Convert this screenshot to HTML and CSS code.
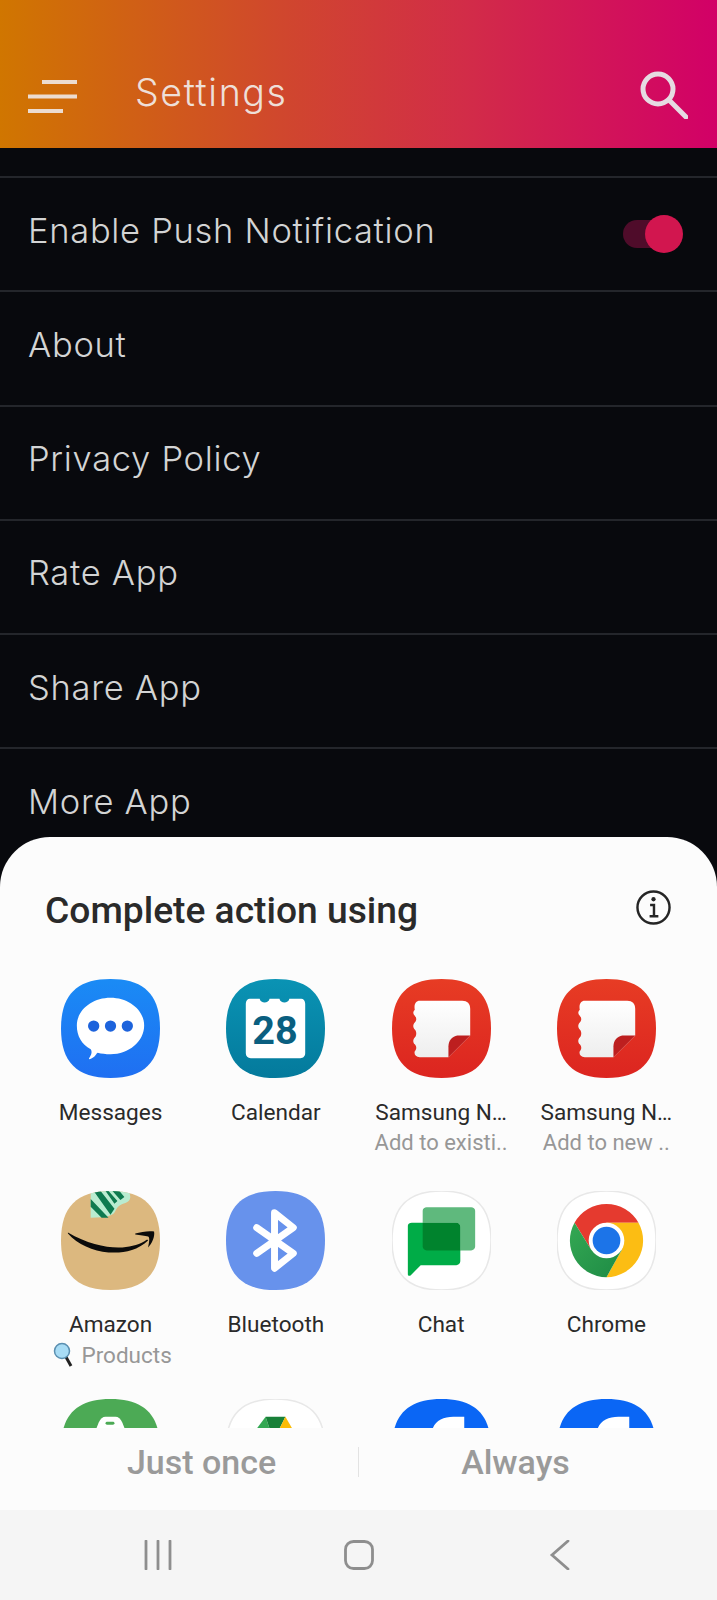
FILE: index.html
```html
<!DOCTYPE html>
<html lang="en">
<head>
<meta charset="utf-8">
<title>Settings</title>
<link rel="stylesheet" href="styles.css">
</head>
<body>
<svg class="defs" width="0" height="0" aria-hidden="true">
  <defs>
    <clipPath id="sq" clipPathUnits="userSpaceOnUse"><path d="M50 0C84 0 100 16 100 50C100 84 84 100 50 100C16 100 0 84 0 50C0 16 16 0 50 0Z"/></clipPath>
    <symbol id="squircle" viewBox="0 0 100 100"><path d="M50 0C84 0 100 16 100 50C100 84 84 100 50 100C16 100 0 84 0 50C0 16 16 0 50 0Z"/></symbol>
    <linearGradient id="gMsg" x1="0" y1="0" x2="0" y2="1"><stop offset="0" stop-color="#1a8bf5"/><stop offset="1" stop-color="#1f6ff2"/></linearGradient>
    <linearGradient id="gCal" x1="0" y1="0" x2="0" y2="1"><stop offset="0" stop-color="#0a93b4"/><stop offset="1" stop-color="#047a9c"/></linearGradient>
    <linearGradient id="gNote" x1="0" y1="0" x2="0" y2="1"><stop offset="0" stop-color="#e73c24"/><stop offset="1" stop-color="#dc2520"/></linearGradient>
    <linearGradient id="gPage" x1="0" y1="0" x2="0" y2="1"><stop offset="0" stop-color="#ffffff"/><stop offset="1" stop-color="#eeeeee"/></linearGradient>
    <linearGradient id="gGreen" x1="0" y1="0" x2="1" y2="1"><stop offset="0" stop-color="#34a853"/><stop offset="1" stop-color="#1e8b45"/></linearGradient>
    <symbol id="notes" viewBox="0 0 100 100">
      <path fill="url(#gNote)" d="M50 0C84 0 100 16 100 50C100 84 84 100 50 100C16 100 0 84 0 50C0 16 16 0 50 0Z"/>
      <path fill="url(#gPage)" d="M28 22H71C76 22 79 25 79 30V57L57 79H28C24 79 22 76 23 73C25 71 25 68 23 66C21 64 21 61 23 59C25 57 25 53 23 51C21 49 21 46 23 44C25 42 25 39 23 37C21 35 21 33 23 31C22 26 24 22 28 22Z"/>
      <path fill="#bd1f1f" d="M57 79V68C57 62 61 58 66 57H79Z"/>
    </symbol>
  </defs>
</svg>

<header class="appbar">
  <svg class="menu-icon" viewBox="0 0 49 33"><path d="M14 2H49M0 16.500H49M0 31H35"/></svg>
  <h1 class="appbar-title">Settings</h1>
  <svg class="search-icon" viewBox="0 0 48 48"><circle cx="18" cy="18" r="15"/><path d="M29 29L46 46"/></svg>
</header>

<main class="settings">
  <div class="row row-toggle">
    <span>Enable Push Notification</span>
    <span class="switch"><span class="switch-track"></span><span class="switch-thumb"></span></span>
  </div>
  <div class="row">About</div>
  <div class="row">Privacy Policy</div>
  <div class="row">Rate App</div>
  <div class="row">Share App</div>
  <div class="row">More App</div>
</main>

<div class="overlay">
  <section class="sheet">
    <div class="sheet-head">
      <h2 class="sheet-title">Complete action using</h2>
      <svg class="info-icon" viewBox="0 0 36 36"><circle cx="18" cy="18" r="16.500"/><path d="M14.500 15.500H18.500V27M14 27H23"/><circle class="info-dot" cx="18" cy="9.500" r="2.200"/></svg>
    </div>
    <div class="apps">
      <div class="app">
        <svg class="app-icon" viewBox="0 0 100 100">
          <use href="#squircle" fill="url(#gMsg)"/>
          <path fill="#fff" d="M50 19C68.700 19 84 31.500 84 47C84 63 68.700 76 50 76C45 76 41 75.500 37 74.500C34 77 36 78 29 81C28 81 28 80 29 79C31 76 31.500 73 30 71C21 66 16 58 16 47C16 31.500 31.300 19 50 19Z"/>
          <circle cx="33" cy="47.500" r="5.700" fill="#1d63dc"/><circle cx="50" cy="47.500" r="5.700" fill="#1d63dc"/><circle cx="67" cy="47.500" r="5.700" fill="#1d63dc"/>
        </svg>
        <span class="app-name">Messages</span>
      </div>
      <div class="app">
        <svg class="app-icon" viewBox="0 0 100 100">
          <use href="#squircle" fill="url(#gCal)"/>
          <path fill="#fff" d="M24 20H34C35 25 43 25 44 20H54C55 25 63 25 64 20H76C78 20 80 22 80 25V75C80 78 78 80 75 80H25C22 80 20 78 20 75V25C20 22 22 20 24 20Z"/>
          <text class="cal-num" x="49.500" y="66" text-anchor="middle">28</text>
        </svg>
        <span class="app-name">Calendar</span>
      </div>
      <div class="app">
        <svg class="app-icon" viewBox="0 0 100 100"><use href="#notes"/></svg>
        <span class="app-name">Samsung N…</span>
        <span class="app-sub">Add to existi..</span>
      </div>
      <div class="app">
        <svg class="app-icon" viewBox="0 0 100 100"><use href="#notes"/></svg>
        <span class="app-name">Samsung N…</span>
        <span class="app-sub">Add to new ..</span>
      </div>
      <div class="app">
        <svg class="app-icon" viewBox="0 0 100 100">
          <use href="#squircle" fill="#dcb87f"/>
          <g clip-path="url(#sq)">
            <path fill="#b9ecd0" d="M30 0H69L70 6C70 9 68 11 65 12C61 13 57 15 55 20C53 25 47 27 30 27Z"/>
            <path fill="#0e7a4f" d="M30 8L48 27H41L30 16ZM33 0H40L54 18L50 24ZM52 0H59L64 6L60 9ZM45 0H48L57 10L54 13Z"/>
          </g>
          <path fill="#0b0b0b" d="M7 42C27 54 48 58 62 57C72 56 80 54 87 49L88 50C76 61 62 63 48 62C32 61 17 54 7 43Z"/>
          <path fill="#0b0b0b" d="M75 43C81 41 90 40 94 41C95 46 92 53 88 57C89 52 90 47 88 46C85 45 80 45 75 44Z"/>
        </svg>
        <span class="app-name">Amazon</span>
        <span class="app-sub app-sub-search"><svg class="mag" viewBox="0 0 20 26"><path class="mag-handle" d="M13 15L18 24"/><circle class="mag-glass" cx="9" cy="9" r="7.500"/></svg>Products</span>
      </div>
      <div class="app">
        <svg class="app-icon" viewBox="0 0 100 100">
          <use href="#squircle" fill="#6792ec"/>
          <path class="bt" d="M31 37L68 63L49 78V22L68 37L31 63"/>
        </svg>
        <span class="app-name">Bluetooth</span>
      </div>
      <div class="app">
        <svg class="app-icon" viewBox="0 0 100 100">
          <use href="#squircle" class="outlined"/>
          <path fill="#00ac47" d="M16 35C16 33 18 32 20 32H65C67 32 69 34 69 36V71C69 73 67 75 65 75H29L19 85C18 86 16 86 16 84Z"/>
          <path fill="#5fb97d" d="M35 16.500C33 16.500 31 18 31 20V32H65C67 32 69 34 69 36V60H80C82 60 84 58 84 56V20C84 18 82 16.500 80 16.500Z"/>
          <path fill="#00832d" d="M31 32H65C67 32 69 34 69 36V60H35C33 60 31 58 31 56Z"/>
        </svg>
        <span class="app-name">Chat</span>
      </div>
      <div class="app">
        <svg class="app-icon" viewBox="0 0 100 100">
          <use href="#squircle" class="outlined"/>
          <path fill="#e53a2f" d="M17.700 32A37 37 0 0 1 82.300 32H50L34.400 59Z"/>
          <path fill="#fcbd13" d="M82.300 32A37 37 0 0 1 50 87L65.600 59L50 32Z"/>
          <path fill="url(#gGreen)" d="M50 87A37 37 0 0 1 17.700 32L34.400 59H65.600Z"/>
          <circle cx="50" cy="50" r="18" fill="#fff"/>
          <circle cx="50" cy="50" r="14" fill="#1c74e8"/>
        </svg>
        <span class="app-name">Chrome</span>
      </div>
      <div class="app">
        <svg class="app-icon" viewBox="0 0 100 100">
          <use href="#squircle" fill="#4caa55"/>
          <path fill="#fff" d="M45 18H55C58 18 60 20 62 24L64 29V100H36V29L38 24C40 20 42 18 45 18Z"/>
          <rect x="45" y="23" width="9" height="3" rx="1.500" fill="#4caa55"/>
        </svg>
      </div>
      <div class="app">
        <svg class="app-icon" viewBox="0 0 100 100">
          <use href="#squircle" class="outlined"/>
          <path fill="#34a853" d="M40 18L44 30H31Z"/>
          <path fill="#188038" d="M40 18H60L54 30H44Z"/>
          <path fill="#fbbc05" d="M60 18L67 30H54Z"/>
        </svg>
      </div>
      <div class="app">
        <svg class="app-icon" viewBox="0 0 100 100">
          <use href="#squircle" fill="#0a66f5"/>
          <path fill="#fff" d="M41 30C44 22 52 18 62 18H73V100H41Z"/>
        </svg>
      </div>
      <div class="app">
        <svg class="app-icon" viewBox="0 0 100 100">
          <use href="#squircle" fill="#0a66f5"/>
          <path fill="#fff" d="M41 30C44 22 52 18 62 18H73V100H41Z"/>
        </svg>
      </div>
    </div>
    <div class="actions">
      <button class="action">Just once</button>
      <span class="action-sep"></span>
      <button class="action">Always</button>
    </div>
  </section>
  <nav class="navbar">
    <svg class="nav-icon" viewBox="0 0 30 30"><path d="M3 1V29M15 1V29M27 1V29"/></svg>
    <svg class="nav-icon" viewBox="0 0 30 30"><rect x="1.500" y="1.500" width="27" height="27" rx="8"/></svg>
    <svg class="nav-icon" viewBox="0 0 30 30"><path d="M23 1L7 15L23 29"/></svg>
  </nav>
</div>
</body>
</html>
```
FILE: styles.css
```css
* { box-sizing: border-box; }
html, body { margin: 0; padding: 0; }
body {
  width: 717px;
  height: 1600px;
  position: relative;
  overflow: hidden;
  background: #08090d;
  font-family: "Inter", "Liberation Sans", sans-serif;
}
.defs { position: absolute; }

.appbar {
  height: 148px;
  background: linear-gradient(90deg, #d07600 0%, #d0462e 40%, #d22c48 65%, #d20067 100%);
  display: flex;
  align-items: center;
  padding: 44px 29px 0 28px;
}
.menu-icon { width: 49px; height: 33px; flex: none; fill: none; stroke: #ecdcd0; stroke-width: 4; }
.appbar-title {
  margin: 0 0 8px 58px;
  flex: 1;
  font-size: 37.500px;
  font-weight: 350;
  color: #eedfd8;
  letter-spacing: 1.600px;
}
.search-icon { width: 48px; height: 48px; flex: none; fill: none; stroke: #e6dbe2; stroke-width: 5; stroke-linecap: round; margin-bottom: 3px; }

.settings { padding-top: 28px; }
.row {
  height: 114.250px;
  border-top: 2px solid #24262b;
  display: flex;
  align-items: center;
  justify-content: space-between;
  padding: 0 34px 8px 28px;
  font-size: 34.500px;
  font-weight: 350;
  color: #d3d4d4;
  letter-spacing: 0.700px;
}
.switch { position: relative; width: 60px; height: 38px; display: block; margin-top: 8px; }
.switch-track { position: absolute; left: 0; top: 5px; width: 44px; height: 28px; border-radius: 14px; background: #4f0c2a; }
.switch-thumb { position: absolute; right: 0; top: 0; width: 38px; height: 38px; border-radius: 50%; background: #d2164f; }

.overlay { position: absolute; left: 0; right: 0; bottom: 0; }
.sheet {
  background: #fcfcfc;
  border-radius: 50px 50px 0 0;
  height: 673px;
  display: flex;
  flex-direction: column;
}
.sheet-head {
  height: 142px;
  flex: none;
  display: flex;
  align-items: flex-start;
  justify-content: space-between;
  padding: 50px 46px 0 45px;
}
.sheet-title { margin: 0; font-family: "Roboto", "Liberation Sans", sans-serif; font-size: 37.200px; line-height: 46px; font-weight: 500; color: #2a2a2a; }
.info-icon { width: 35px; height: 35px; margin-top: 3px; fill: none; stroke: #252525; stroke-width: 2.500; }
.info-dot { fill: #252525; stroke: none; }

.apps {
  height: 449px;
  overflow: hidden;
  flex: none;
  padding: 0 28px;
  display: grid;
  grid-template-columns: repeat(4, 1fr);
  grid-template-rows: 212px 208px 208px;
  align-content: start;
  font-family: "Roboto", "Liberation Sans", sans-serif;
}
.app { display: flex; flex-direction: column; align-items: center; }
.app-icon { width: 99px; height: 99px; flex: none; }
.app-name { margin-top: 20px; font-size: 22.600px; line-height: 30px; color: #2a2a2a; white-space: nowrap; }
.app-sub { font-size: 22px; line-height: 30px; color: #979797; white-space: nowrap; }
.app-sub-search { display: flex; align-items: center; gap: 8px; margin-left: 4px; font-size: 22.500px; }
.mag { width: 20px; height: 26px; }
.mag-glass { fill: #a8dcf5; stroke: #5a8fb0; stroke-width: 1.500; }
.mag-handle { stroke: #222; stroke-width: 3; fill: none; }
.cal-num { font-family: "Roboto", sans-serif; font-weight: 700; font-size: 40px; fill: #0a5f80; }
.bt { fill: none; stroke: #fff; stroke-width: 7; stroke-linejoin: round; stroke-linecap: round; }
.outlined { fill: #fff; stroke: #e8e8e8; stroke-width: 1.500; }

.actions {
  flex: 1;
  display: flex;
  align-items: center;
  justify-content: center;
  padding: 0 45px 14px;
  font-family: "Roboto", "Liberation Sans", sans-serif;
}
.action {
  flex: 1;
  border: 0;
  background: none;
  padding: 0;
  font: inherit;
  font-size: 34px;
  font-weight: 500;
  color: #9a9a9a;
}
.action-sep { width: 1px; height: 30px; background: #e3e3e3; flex: none; }

.navbar {
  height: 90px;
  background: #f5f5f5;
  display: grid;
  grid-template-columns: repeat(3, 1fr);
  justify-items: center;
  align-items: center;
  padding: 0 57px;
}
.nav-icon { width: 30px; height: 30px; fill: none; stroke: #8e8e8e; stroke-width: 2.800; stroke-linecap: round; }
```
